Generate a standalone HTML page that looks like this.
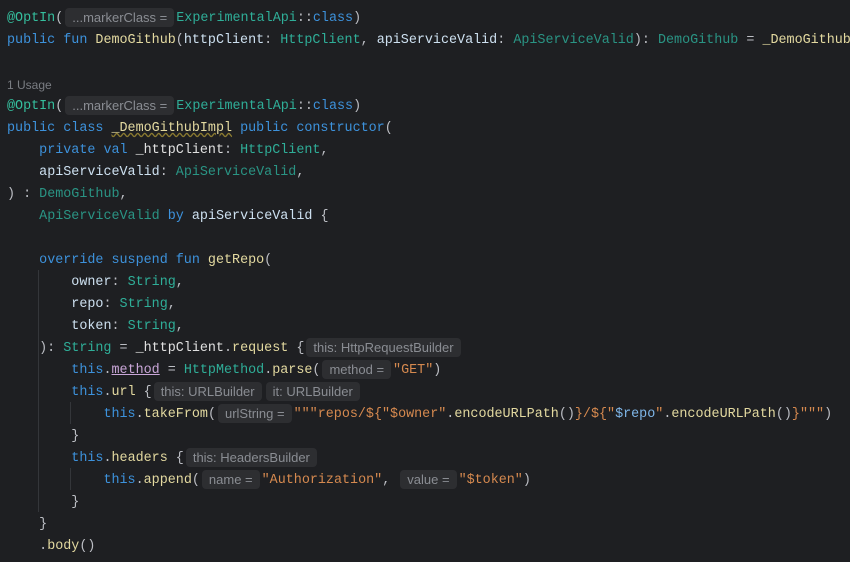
<!DOCTYPE html>
<html><head><meta charset="utf-8"><style>
html,body{margin:0;padding:0;background:#1e1f22;width:850px;height:562px;overflow:hidden}
.c{position:absolute;left:7px;top:8px;width:843px;overflow:hidden;font-family:"Liberation Mono",monospace;font-size:13.4px;line-height:22px;color:#bcbec4}
.l{height:22px;white-space:pre;overflow:visible}
.k{color:#3d92dc}.t{color:#2fae98}.td{color:#2a9484}.f{color:#e3d9a0}.p{color:#cde0f0}.s{color:#d5894f}.a{color:#35bf9e}.pr{color:#c9a6d8}.w{color:#e0e0e0}
.h{display:inline-block;font-family:"Liberation Sans",sans-serif;font-size:13px;line-height:19px;height:19px;background:#2d2e31;color:#8a8d93;border-radius:4px;padding:0 7px;margin:0 2px;vertical-align:top;position:relative;top:0px}
.u{font-family:"Liberation Sans",sans-serif;font-size:12px;color:#7a7d83}
.g{position:absolute;width:1px;background:#34363a}
</style></head><body>
<div class="g" style="left:38px;top:270px;height:242px"></div>
<div class="g" style="left:70px;top:402px;height:22px"></div>
<div class="g" style="left:70px;top:468px;height:22px"></div>
<div class="c"><div class="l"><span class="a">@OptIn</span>(<span class="h">...markerClass =</span><span class="t">ExperimentalApi</span>::<span class="k">class</span>)</div><div class="l"><span class="k">public fun</span> <span class="f">DemoGithub</span>(<span class="p">httpClient</span>: <span class="t">HttpClient</span>, <span class="p">apiServiceValid</span>: <span class="td">ApiServiceValid</span>): <span class="td">DemoGithub</span> = <span class="f">_DemoGithubImpl</span>(httpClient, apiServiceValid)</div><div class="l"></div><div class="l"><span class="u">1 Usage</span></div><div class="l"><span class="a">@OptIn</span>(<span class="h">...markerClass =</span><span class="t">ExperimentalApi</span>::<span class="k">class</span>)</div><div class="l"><span class="k">public class</span> <span class="f" style="text-decoration:underline wavy #8a7a30">_DemoGithubImpl</span> <span class="k">public constructor</span>(</div><div class="l">    <span class="k">private val</span> <span class="w">_httpClient</span>: <span class="t">HttpClient</span>,</div><div class="l">    <span class="p">apiServiceValid</span>: <span class="td">ApiServiceValid</span>,</div><div class="l">) : <span class="td">DemoGithub</span>,</div><div class="l">    <span class="td">ApiServiceValid</span> <span class="k">by</span> <span class="p">apiServiceValid</span> {</div><div class="l"></div><div class="l">    <span class="k">override suspend fun</span> <span class="f">getRepo</span>(</div><div class="l">        <span class="p">owner</span>: <span class="t">String</span>,</div><div class="l">        <span class="p">repo</span>: <span class="t">String</span>,</div><div class="l">        <span class="p">token</span>: <span class="t">String</span>,</div><div class="l">    ): <span class="t">String</span> = <span class="w">_httpClient</span>.<span class="f">request</span> {<span class="h">this: HttpRequestBuilder</span></div><div class="l">        <span class="k">this</span>.<span class="pr" style="text-decoration:underline">method</span> = <span class="t">HttpMethod</span>.<span class="f">parse</span>(<span class="h">method =</span><span class="s">"GET"</span>)</div><div class="l">        <span class="k">this</span>.<span class="f">url</span> {<span class="h">this: URLBuilder</span><span class="h">it: URLBuilder</span></div><div class="l">            <span class="k">this</span>.<span class="f">takeFrom</span>(<span class="h">urlString =</span><span class="s">"""repos/${"$owner"</span>.<span class="f">encodeURLPath</span>()<span class="s">}/${"</span><span style="color:#7fb6e8">$repo</span><span class="s">"</span>.<span class="f">encodeURLPath</span>()<span class="s">}"""</span>)</div><div class="l">        }</div><div class="l">        <span class="k">this</span>.<span class="f">headers</span> {<span class="h">this: HeadersBuilder</span></div><div class="l">            <span class="k">this</span>.<span class="f">append</span>(<span class="h">name =</span><span class="s">"Authorization"</span>, <span class="h">value =</span><span class="s">"$token"</span>)</div><div class="l">        }</div><div class="l">    }</div><div class="l">    .<span class="f">body</span>()</div></div>
</body></html>
